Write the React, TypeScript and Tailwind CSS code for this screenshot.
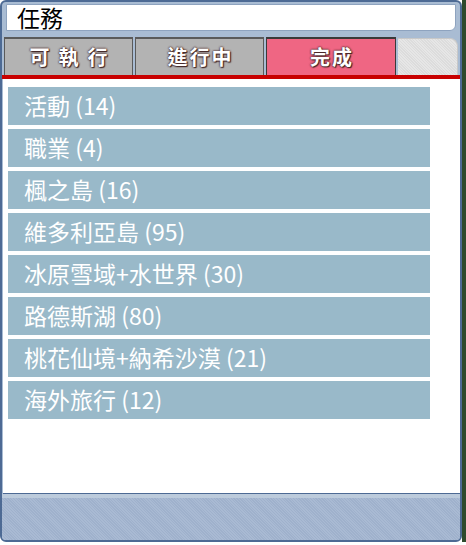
import React from "react";

const items = [
  "活動 (14)",
  "職業 (4)",
  "楓之島 (16)",
  "維多利亞島 (95)",
  "冰原雪域+水世界 (30)",
  "路德斯湖 (80)",
  "桃花仙境+納希沙漠 (21)",
  "海外旅行 (12)",
];

const font = { fontFamily: '"Noto Sans CJK TC", "Noto Sans", sans-serif' };

const tabText =
  "text-white font-bold text-[20px] leading-none [text-shadow:0_0_2px_#4a2a2a,0_0_2px_#4a2a2a,1px_1px_1px_#3a2020]";

export default function App() {
  return (
    <div className="w-[466px] h-[545px] bg-white flex" style={font}>
      <div className="w-[462px] h-[542px] bg-[#a9bcd3] border-2 border-[#4d6a94] rounded-[6px] flex flex-col overflow-hidden">
        {/* title */}
        <div className="pt-[2px] px-[4px]">
          <div className="h-[27px] bg-white border border-[#8ea3bf] rounded-br-[6px] flex items-center pl-[10px] text-[23px] text-black leading-none">
            任務
          </div>
        </div>
        {/* tabs */}
        <div className="mt-[6px] flex h-[38px] px-[2px] gap-[2px] items-end">
          <div className="w-[129px] h-[38px] bg-[#b3b3b3] border-t-2 border-x border-[#5a5a5a] flex items-center justify-center">
            <span className={tabText + " tracking-[9px] pl-[9px]"}>可執行</span>
          </div>
          <div className="w-[129px] h-[38px] bg-[#b3b3b3] border-t-2 border-x border-[#5a5a5a] flex items-center justify-center">
            <span className={tabText + " tracking-[2px] pl-[2px]"}>進行中</span>
          </div>
          <div className="w-[130px] h-[38px] bg-[#ef6683] border-t-2 border-x border-[#3a3a3a] flex items-center justify-center">
            <span className={tabText + " tracking-[2px] pl-[2px]"}>完成</span>
          </div>
          <div className="flex-1 h-[37px] bg-[#e2e2e2] bg-[repeating-linear-gradient(45deg,#e6e6e6_0px,#e6e6e6_1px,#dcdcdc_1px,#dcdcdc_2px)] border-t border-r border-[#c8c8c8] rounded-tr-[8px]" />
        </div>
        <div className="h-[4px] bg-[#c80000]" />
        {/* content */}
        <div className="flex-1 bg-white ml-[1px] border-b border-[#4d6a94] pt-[8px] pl-[5px] flex flex-col gap-[4.5px]">
          {items.map((t) => (
            <div
              key={t}
              className="w-[422px] h-[37.5px] bg-[#99b9c9] flex items-center pl-[16px] text-white text-[23px] leading-none"
            >
              {t}
            </div>
          ))}
        </div>
        {/* bottom bar */}
        <div className="h-[46px] bg-[#a5b6d0] bg-[repeating-linear-gradient(45deg,#a9bad3_0px,#a9bad3_1px,#9fb1cc_1px,#9fb1cc_2px)] flex flex-col">
          <div className="h-[4px] bg-[#bccbdc]" />
        </div>
      </div>
      <div className="w-[4px] h-[542px] bg-[#2e4a2c]" />
    </div>
  );
}
